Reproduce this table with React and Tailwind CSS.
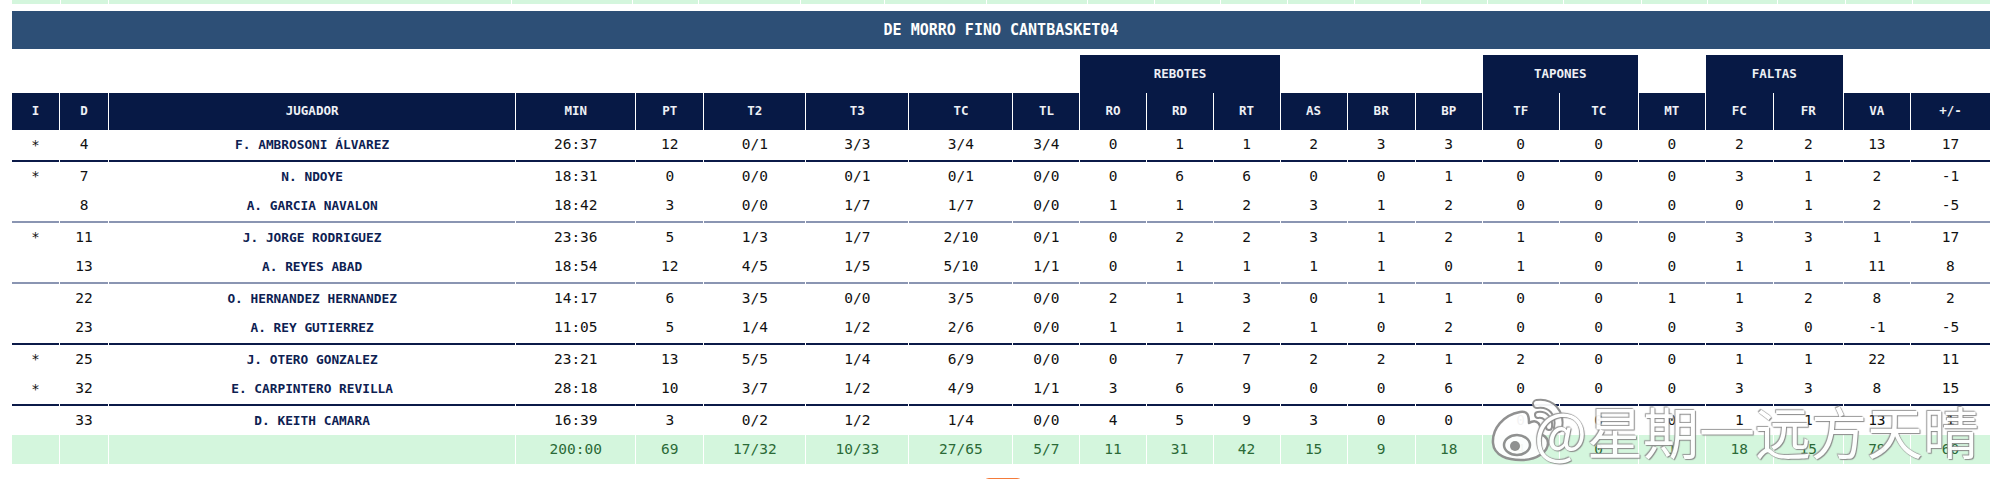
import React from "react";

const prevCols = [48, 48, 403, 121, 66, 102, 84, 102, 101, 67, 66, 67, 67, 66, 67, 76, 78, 66, 70, 68, 67, 78];

const colWidths = [
  "w-[47px]", "w-[48px]", "w-[406px]", "w-[119px]", "w-[67px]", "w-[101px]", "w-[102px]", "w-[103px]",
  "w-[66px]", "w-[65px]", "w-[66px]", "w-[66px]", "w-[66px]", "w-[67px]", "w-[66px]", "w-[76px]",
  "w-[78px]", "w-[66px]", "w-[67px]", "w-[69px]", "w-[66px]", "w-[79px]",
];

const prevWidths = [
  "w-[48px]", "w-[48px]", "w-[403px]", "w-[121px]", "w-[66px]", "w-[102px]", "w-[84px]", "w-[102px]",
  "w-[101px]", "w-[67px]", "w-[66px]", "w-[67px]", "w-[67px]", "w-[66px]", "w-[67px]", "w-[76px]",
  "w-[78px]", "w-[66px]", "w-[70px]", "w-[68px]", "w-[67px]", "w-[78px]",
];

const headers = ["I", "D", "JUGADOR", "MIN", "PT", "T2", "T3", "TC", "TL", "RO", "RD", "RT", "AS", "BR", "BP", "TF", "TC", "MT", "FC", "FR", "VA", "+/-"];

// border: null = none, "navy" or "gray" = top line above the row
const players = [
  { b: null, d: ["*", "4", "F. AMBROSONI ÁLVAREZ", "26:37", "12", "0/1", "3/3", "3/4", "3/4", "0", "1", "1", "2", "3", "3", "0", "0", "0", "2", "2", "13", "17"] },
  { b: "navy", d: ["*", "7", "N. NDOYE", "18:31", "0", "0/0", "0/1", "0/1", "0/0", "0", "6", "6", "0", "0", "1", "0", "0", "0", "3", "1", "2", "-1"] },
  { b: null, d: ["", "8", "A. GARCIA NAVALON", "18:42", "3", "0/0", "1/7", "1/7", "0/0", "1", "1", "2", "3", "1", "2", "0", "0", "0", "0", "1", "2", "-5"] },
  { b: "gray", d: ["*", "11", "J. JORGE RODRIGUEZ", "23:36", "5", "1/3", "1/7", "2/10", "0/1", "0", "2", "2", "3", "1", "2", "1", "0", "0", "3", "3", "1", "17"] },
  { b: null, d: ["", "13", "A. REYES ABAD", "18:54", "12", "4/5", "1/5", "5/10", "1/1", "0", "1", "1", "1", "1", "0", "1", "0", "0", "1", "1", "11", "8"] },
  { b: "gray", d: ["", "22", "O. HERNANDEZ HERNANDEZ", "14:17", "6", "3/5", "0/0", "3/5", "0/0", "2", "1", "3", "0", "1", "1", "0", "0", "1", "1", "2", "8", "2"] },
  { b: null, d: ["", "23", "A. REY GUTIERREZ", "11:05", "5", "1/4", "1/2", "2/6", "0/0", "1", "1", "2", "1", "0", "2", "0", "0", "0", "3", "0", "-1", "-5"] },
  { b: "navy", d: ["*", "25", "J. OTERO GONZALEZ", "23:21", "13", "5/5", "1/4", "6/9", "0/0", "0", "7", "7", "2", "2", "1", "2", "0", "0", "1", "1", "22", "11"] },
  { b: null, d: ["*", "32", "E. CARPINTERO REVILLA", "28:18", "10", "3/7", "1/2", "4/9", "1/1", "3", "6", "9", "0", "0", "6", "0", "0", "0", "3", "3", "8", "15"] },
  { b: "navy", d: ["", "33", "D. KEITH CAMARA", "16:39", "3", "0/2", "1/2", "1/4", "0/0", "4", "5", "9", "3", "0", "0", "0", "0", "0", "1", "1", "13", "1"] },
];

const totals = ["", "", "", "200:00", "69", "17/32", "10/33", "27/65", "5/7", "11", "31", "42", "15", "9", "18", "4", "0", "1", "18", "15", "79", "60"];

const WeiboLogo = () => (
  <svg width="74" height="64" viewBox="0 0 74 64">
    <g fill="#ffffff" stroke="#8c8c8c" strokeWidth="2.5" strokeLinejoin="round">
      <path d="M30 14 C13 17 2 31 3 45 C4 58 18 62 31 62 C48 62 58 53 58 45 C58 39 52 36 49 36 C53 27 47 20 39 25 C39 16 37 13 30 14 Z" />
      <ellipse cx="27" cy="47" rx="13" ry="10" />
      <circle cx="25" cy="48" r="5" fill="#8c8c8c" stroke="none" />
    </g>
    <g fill="none" stroke="#8c8c8c" strokeLinecap="round">
      <path d="M47 6 C61 4 71 15 68 30" strokeWidth="10" />
      <path d="M48 17 C55 16 60 21 59 29" strokeWidth="8" />
    </g>
    <g fill="none" stroke="#ffffff" strokeLinecap="round">
      <path d="M47 6 C61 4 71 15 68 30" strokeWidth="6" />
      <path d="M48 17 C55 16 60 21 59 29" strokeWidth="4" />
    </g>
  </svg>
);

export default function App() {
  return (
    <div className="relative min-h-screen bg-white pl-[12px] pr-[10px] font-['DejaVu_Sans_Mono',monospace]">
      {/* end of the previous table (totals row) */}
      <div className="flex h-[4px]">
        {prevCols.map((_, i) => (
          <div key={i} className={`${prevWidths[i]} h-full bg-[#d4f6dd] ${i > 0 ? "border-l border-white" : ""}`} />
        ))}
      </div>

      <div className="mt-[7px] flex h-[38px] w-[1978px] items-center justify-center bg-[#2d4f76] text-[15px] font-bold text-white">
        DE MORRO FINO CANTBASKET04
      </div>

      <table className="mt-[6px] w-[1980px] table-fixed border-separate border-spacing-x-[1px] border-spacing-y-0 -ml-px">
        <colgroup>
          {colWidths.map((w, i) => (
            <col key={i} className={w} />
          ))}
        </colgroup>
        <thead>
          <tr className="h-[38px] text-[12.5px] font-bold text-[#eef0f5]">
            <th colSpan={9}></th>
            <th colSpan={3} className="bg-[#071945]">REBOTES</th>
            <th colSpan={3}></th>
            <th colSpan={2} className="bg-[#071945]">TAPONES</th>
            <th></th>
            <th colSpan={2} className="bg-[#071945]">FALTAS</th>
            <th colSpan={2}></th>
          </tr>
          <tr className="h-[37px] text-[12.5px] font-bold text-[#eef0f5]">
            {headers.map((h, i) => (
              <th key={i} className="bg-[#071945] text-center font-bold">
                {h}
              </th>
            ))}
          </tr>
        </thead>
        <tbody>
          {players.map((p, r) => (
            <tr key={r} className={p.b ? "h-[31px]" : "h-[30px]"}>
              {p.d.map((v, i) => (
                <td
                  key={i}
                  className={`p-0 text-center align-middle ${
                    p.b === "navy" ? "border-t-2 border-[#0b1a48]" : p.b === "gray" ? "border-t-2 border-[#8a95b2]" : ""
                  } ${
                    i === 2
                      ? "text-[12.8px] font-bold text-[#0d2152]"
                      : i === 0
                      ? "text-[14px] text-[#111111]"
                      : "text-[14.5px] text-[#111111]"
                  }`}
                >
                  {v}
                </td>
              ))}
            </tr>
          ))}
          <tr className="h-[29px]">
            {totals.map((v, i) => (
              <td key={i} className="bg-[#d4f6dd] p-0 text-center align-middle text-[14.5px] text-[#2b6a37]">
                {v}
              </td>
            ))}
          </tr>
        </tbody>
      </table>

      <div className="ml-[971px] mt-[14px] h-[12px] w-[40px] rounded-t-[6px] bg-[#f47b3a]" />

      {/* watermark */}
      <div className="pointer-events-none absolute left-[1490px] top-[398px] flex items-center whitespace-nowrap opacity-95">
        <WeiboLogo />
        <span className="-ml-[30px] font-['Noto_Sans_CJK_SC',sans-serif] text-[56px] leading-none text-white [text-shadow:0_0_1px_#777,1px_1px_1px_#888,-1px_-1px_1px_#999]">
          @星期一远方天晴
        </span>
      </div>
    </div>
  );
}
